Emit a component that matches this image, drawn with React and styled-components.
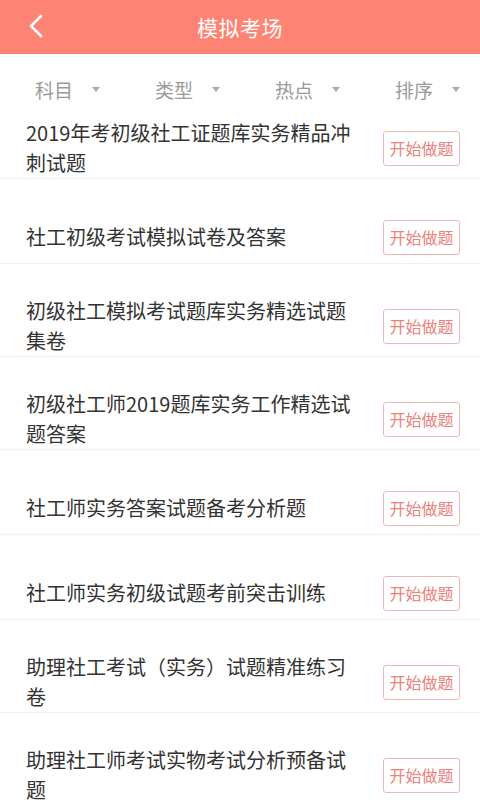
import React from "react";
import styled, { createGlobalStyle } from "styled-components";

const GlobalStyle = createGlobalStyle`
  html, body {
    margin: 0;
    padding: 0;
    background: #fff;
    font-family: "Noto Sans CJK SC", "Noto Sans", sans-serif;
  }
`;

const filters = ["科目", "类型", "热点", "排序"];

const papers = [
  "2019年考初级社工证题库实务精品冲刺试题",
  "社工初级考试模拟试卷及答案",
  "初级社工模拟考试题库实务精选试题集卷",
  "初级社工师2019题库实务工作精选试题答案",
  "社工师实务答案试题备考分析题",
  "社工师实务初级试题考前突击训练",
  "助理社工考试（实务）试题精准练习卷",
  "助理社工师考试实物考试分析预备试题",
];

function BackIcon() {
  return (
    <svg width="16" height="24" viewBox="0 0 16 24">
      <path
        d="M13 2 L3 12 L13 22"
        fill="none"
        stroke="#fff"
        strokeWidth="2.6"
        strokeLinecap="round"
        strokeLinejoin="round"
      />
    </svg>
  );
}

function App() {
  return (
    <Page>
      <GlobalStyle />
      <Header>
        <BackButton>
          <BackIcon />
        </BackButton>
        <Title>模拟考场</Title>
      </Header>
      <FilterBar>
        {filters.map((f) => (
          <FilterItem key={f}>
            {f}
            <Caret />
          </FilterItem>
        ))}
      </FilterBar>
      <List>
        {papers.map((p, i) => (
          <Row key={p} first={i === 0}>
            <RowInner>
              <PaperTitle>{p}</PaperTitle>
              <StartButton>开始做题</StartButton>
            </RowInner>
          </Row>
        ))}
      </List>
    </Page>
  );
}

const Page = styled.div`
  width: 480px;
  height: 800px;
  overflow: hidden;
  background: #fff;
`;

const Header = styled.div`
  height: 54px;
  background: #fd8375;
  display: flex;
  align-items: center;
  justify-content: center;
  position: relative;
`;

const BackButton = styled.div`
  position: absolute;
  left: 28px;
  top: 14px;
  display: flex;
`;

const Title = styled.div`
  color: #fff;
  font-size: 21px;
  line-height: 1;
  letter-spacing: 0.5px;
`;

const FilterBar = styled.div`
  height: 58px;
  padding-top: 12px;
  box-sizing: border-box;
  display: grid;
  grid-template-columns: repeat(4, 1fr);
`;

const FilterItem = styled.div`
  display: flex;
  align-items: center;
  padding-left: 35px;
  gap: 19px;
  color: #9a9a9a;
  font-size: 19px;
  height: 46px;
`;

const Caret = styled.span`
  width: 0;
  height: 0;
  border-left: 4px solid transparent;
  border-right: 4px solid transparent;
  border-top: 5px solid #ababab;
`;

const List = styled.div`
  display: flex;
  flex-direction: column;
`;

const Row = styled.div`
  padding: ${(p) => (p.first ? "6px" : "32px")} 20px 0 26px;
  border-bottom: 1px solid #f1f1f1;
`;

const RowInner = styled.div`
  min-height: 52px;
  display: flex;
  align-items: center;
  gap: 23px;
`;

const PaperTitle = styled.div`
  flex: 1;
  color: #333;
  font-size: 20px;
  line-height: 30px;
`;

const StartButton = styled.div`
  flex-shrink: 0;
  width: 77px;
  height: 35px;
  box-sizing: border-box;
  border: 1px solid #ebb8b6;
  border-radius: 3px;
  color: #ee7f7b;
  font-size: 16px;
  display: flex;
  align-items: center;
  justify-content: center;
`;

export default App;
